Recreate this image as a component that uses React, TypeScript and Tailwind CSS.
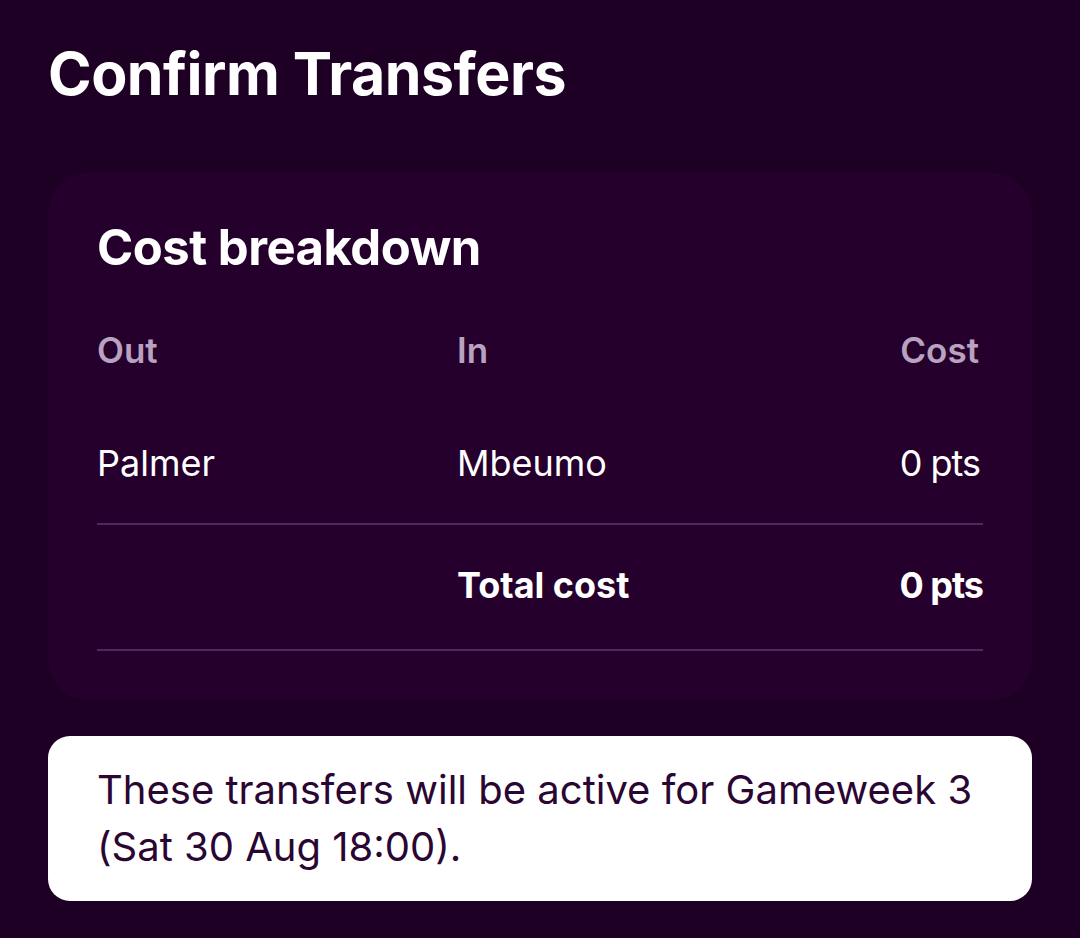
import React from "react";

export default function App() {
  return (
    <div
      className="w-[1080px] h-[938px] bg-[#1d0024] px-[48px] pt-[40px] overflow-hidden"
      style={{ fontFamily: "Inter, 'Noto Sans', sans-serif" }}
    >
      <h1 className="text-white font-bold text-[59px] leading-[68px] tracking-[-0.5px]">
        Confirm Transfers
      </h1>
      <div className="mt-[65px] bg-[#26002d] rounded-[40px] px-[49px] pt-[47px] pb-[49px]">
        <h2 className="text-white font-bold text-[49px] leading-[56px] tracking-[-0.5px]">
          Cost breakdown
        </h2>
        <div className="mt-[52px] grid grid-cols-[360px_1fr_auto] text-[35px] leading-[44px] text-[#b9a1c0] font-semibold">
          <div>Out</div>
          <div>In</div>
          <div className="text-right pr-[4px]">Cost</div>
        </div>
        <div className="mt-[69px] grid grid-cols-[360px_1fr_auto] text-[36px] leading-[44px] text-white font-normal pb-[38px] border-b-2 border-[#4c2a5c]">
          <div>Palmer</div>
          <div>Mbeumo</div>
          <div className="text-right pr-[3px] tracking-[-1px]">0 pts</div>
        </div>
        <div className="grid grid-cols-[360px_1fr_auto] text-[36px] leading-[44px] text-white font-bold pt-[38px] pb-[42px] border-b-2 border-[#4c2a5c]">
          <div></div>
          <div>Total cost</div>
          <div className="text-right tracking-[-1px]">0 pts</div>
        </div>
      </div>
      <div className="mt-[36px] bg-white rounded-[22px] px-[49px] pt-[25px] pb-[26px]">
        <p className="text-[#2a0633] text-[40px] leading-[57px]">
          These transfers will be active for Gameweek 3 (Sat 30 Aug 18:00).
        </p>
      </div>
    </div>
  );
}
